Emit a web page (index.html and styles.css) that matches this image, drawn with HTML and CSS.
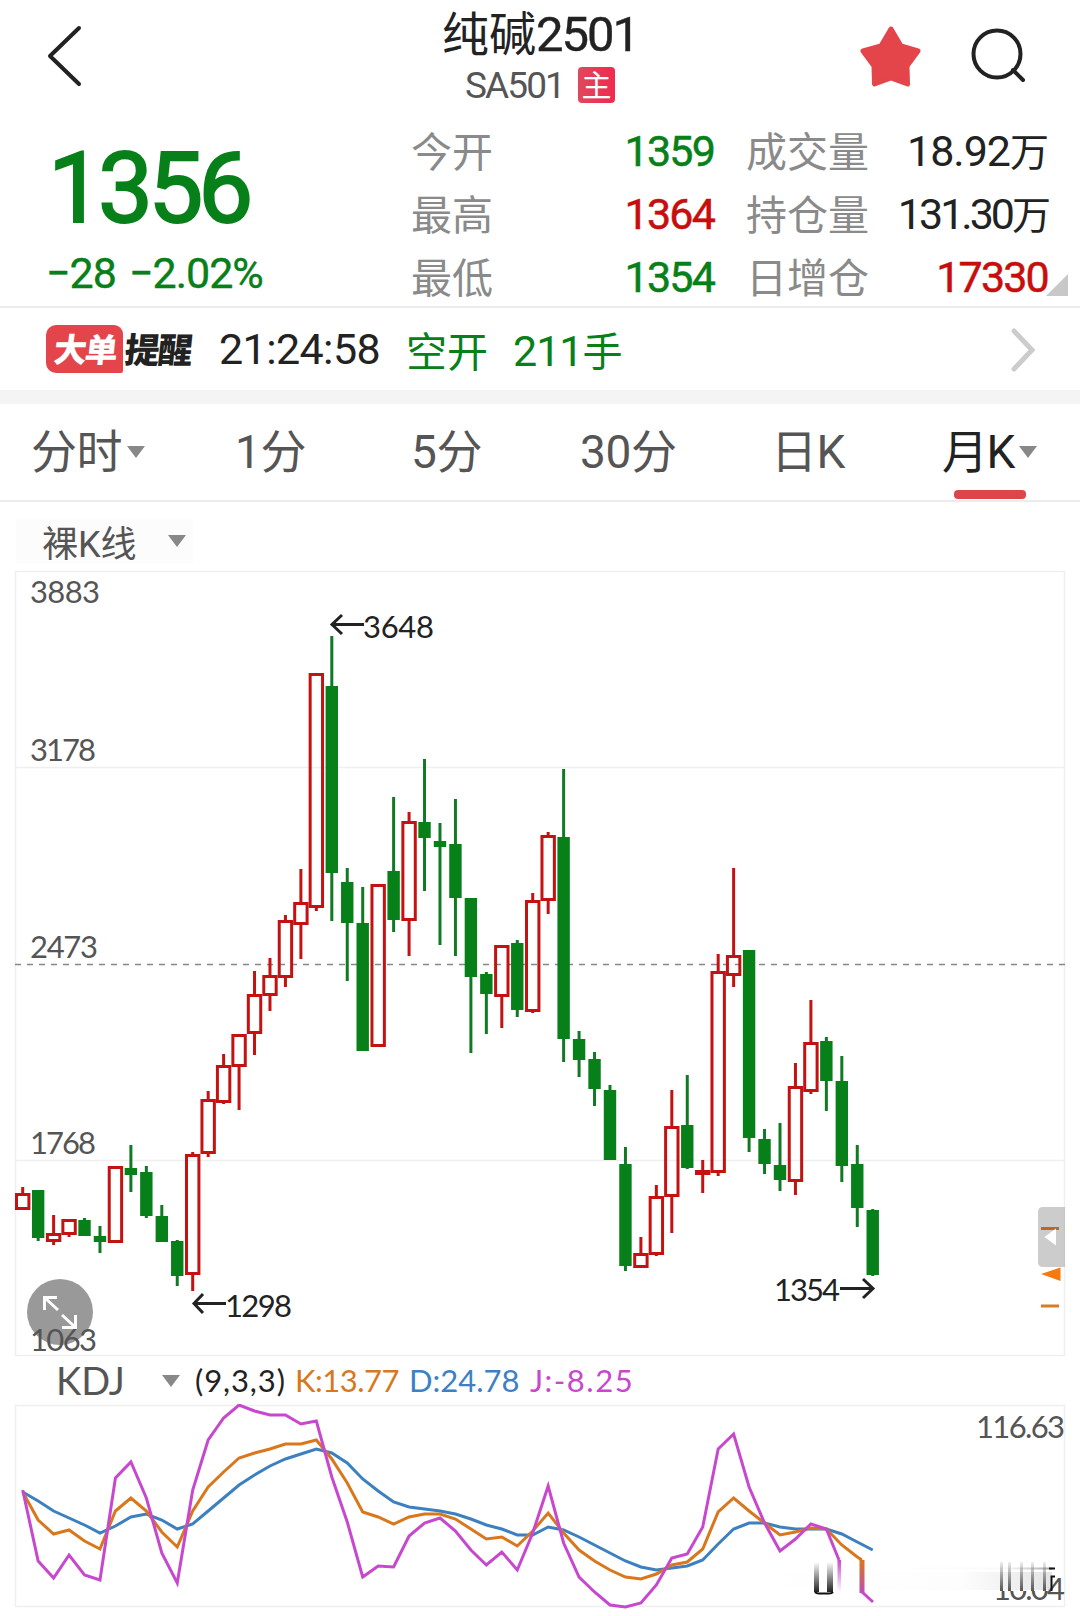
FILE: index.html
```html
<!DOCTYPE html>
<html lang="zh-CN">

<head>
  <meta charset="UTF-8">
  <meta name="viewport" content="width=device-width, initial-scale=1.0">
  <title>纯碱2501</title>

  <link rel="stylesheet" href="styles.css">
</head>

<body>
  <div id="container">
    <header class="top">
      <svg class="back" width="40" height="68" viewBox="0 0 40 68"><path d="M35 6 L6 34 L35 62"/></svg>
      <div class="name">
        <h1>纯碱<span>2501</span></h1>
        <p><span>SA501</span><em>主</em></p>
      </div>
      <div class="tools">
        <svg class="star" width="64" height="64" viewBox="0 0 64 64"><path d="M32 5 L42 22 L59 27 L48 42 L48.500 60 L32 54 L15.500 60 L15 42 L4 27 L22 22 Z"/></svg>
        <svg class="search" width="60" height="60" viewBox="0 0 60 60"><circle cx="28" cy="28" r="23.500"/><path d="M44 44 L54 54"/></svg>
      </div>
    </header>

    <section class="quote">
      <div class="price">
        <strong>1356</strong>
        <p><span>−28</span><span>−2.02%</span></p>
      </div>
      <dl class="detail">
        <dt>今开</dt><dd class="down">1359</dd>
        <dt>成交量</dt><dd class="volume">18.92<i>万</i></dd>
        <dt>最高</dt><dd class="up">1364</dd>
        <dt>持仓量</dt><dd class="hold">131.30<i>万</i></dd>
        <dt>最低</dt><dd class="down">1354</dd>
        <dt>日增仓</dt><dd class="up">17330</dd>
      </dl>
      <span class="corner"></span>
    </section>

    <section class="alert">
      <span class="tag"><b>大单</b></span><b class="remind">提醒</b>
      <span class="time">21:24:58</span>
      <span class="kind">空开</span>
      <span class="hands">211<i>手</i></span>
      <svg class="more" width="26" height="46" viewBox="0 0 26 46"><path d="M3 5 L21 24 L3 43"/></svg>
    </section>

    <nav class="tabs">
      <a class="arrow">分时</a>
      <a>1分</a>
      <a>5分</a>
      <a>30分</a>
      <a>日K</a>
      <a class="arrow on">月K</a>
    </nav>

    <div class="overlay"><span class="arrow">裸K线</span></div>

    <div class="kline">
      <svg width="1080" height="787" viewBox="0 570 1080 787">
        <g class="grid">
          <rect x="15.500" y="571.500" width="1049" height="784"/>
          <path d="M15 767.500 H1065 M15 1160.500 H1065"/>
          <path class="dash" d="M15 964.500 H1065"/>
        </g>
        <g id="candles"></g>
        <g class="axis">
          <text x="30" y="603" textLength="70">3883</text>
          <text x="30" y="761" textLength="66">3178</text>
          <text x="30" y="958" textLength="68">2473</text>
          <text x="30" y="1154" textLength="66">1768</text>
          <text x="30" y="1351" textLength="67">1063</text>
        </g>
        <g class="mark">
          <path d="M364 624.500 H332 M342 615 L332 624.500 L342 634"/>
          <text x="363" y="638" textLength="71">3648</text>
          <path d="M226 1303.500 H194 M203 1294 L194 1303.500 L203 1313"/>
          <text x="225" y="1317" textLength="67">1298</text>
          <path d="M840 1288.500 H873 M863 1279 L873 1288.500 L863 1298"/>
          <text x="774" y="1301" textLength="66">1354</text>
        </g>
        <g class="zoom">
          <circle cx="60" cy="1312" r="33"/>
          <path d="M44.500 1310 V1297.500 H57 M45 1298 L58 1310 M62 1315 L75 1327 M75.500 1315 V1327.500 H62"/>
        </g>
        <g class="side">
          <path class="line" d="M1041 1228.500 H1059 M1041 1306 H1059"/>
          <path class="flag" d="M1041 1274 L1060.500 1267.500 V1281 Z"/>
          <path class="handle" d="M1065 1207 H1043 Q1038 1207 1038 1212 V1262 Q1038 1267 1043 1267 H1065 Z"/>
          <path class="line top-line" d="M1041 1228.500 H1059"/>
          <path class="tri" d="M1044.500 1237 L1056 1228.500 V1245.500 Z"/>
        </g>
      </svg>
    </div>

    <div class="kdj-bar">
      <span class="arrow">KDJ</span>
      <span class="param">(9,3,3)</span>
      <span class="k">K:13.77</span>
      <span class="d">D:24.78</span>
      <span class="j">J:-8.25</span>
    </div>

    <div class="kdj">
      <svg width="1080" height="212" viewBox="0 1404 1080 212">
        <defs>
          <linearGradient id="smear" x1="0" y1="0" x2="0" y2="1">
            <stop offset="0" stop-color="#222" stop-opacity="0"/>
            <stop offset="1" stop-color="#222"/>
          </linearGradient>
          <linearGradient id="smearAxis" x1="0" y1="0" x2="0" y2="1">
            <stop offset="0" stop-color="#555" stop-opacity=".1"/>
            <stop offset="1" stop-color="#555"/>
          </linearGradient>
          <linearGradient id="smearJ" x1="0" y1="0" x2="0" y2="1">
            <stop offset="0" stop-color="#c748cf"/>
            <stop offset="1" stop-color="#c748cf" stop-opacity="0"/>
          </linearGradient>
          <linearGradient id="smearK" x1="0" y1="0" x2="0" y2="1">
            <stop offset="0" stop-color="#d9771c"/>
            <stop offset="1" stop-color="#bb50b5"/>
          </linearGradient>
          <linearGradient id="haze">
            <stop offset="0" stop-color="#888" stop-opacity="0"/>
            <stop offset=".7" stop-color="#888" stop-opacity=".05"/>
            <stop offset="1" stop-color="#666" stop-opacity=".6"/>
          </linearGradient>
        </defs>
        <g class="grid">
          <rect x="15.500" y="1405.500" width="1049" height="201"/>
        </g>
        <g id="lines"></g>
        <g class="axis">
          <text x="976" y="1438" textLength="89">116.63</text>
          <text x="993" y="1600" textLength="72">10.04</text>
        </g>
        <!-- blurred strip over the bottom right -->
        <rect x="990" y="1562" width="58" height="29" fill="#fff"/>
        <rect x="745" y="1572" width="307" height="18" fill="url(#haze)" opacity=".3"/>
        <rect x="814" y="1562" width="5" height="30" fill="url(#smear)"/>
        <rect x="827" y="1562" width="6" height="30" fill="url(#smear)"/>
        <path class="edge" d="M815 1592 Q816 1593.500 819 1593.500 H829 Q832 1593.500 833 1592"/>
        <rect x="837.500" y="1560" width="3.500" height="32" fill="url(#smearJ)"/>
        <rect x="859.500" y="1560" width="5" height="33" fill="url(#smearK)"/>
        <path class="j-tail" d="M862 1592 L873 1602"/>
        <g fill="url(#smearAxis)">
          <rect x="1000" y="1562" width="3" height="29"/>
          <rect x="1008" y="1562" width="3" height="29"/>
          <rect x="1020" y="1562" width="3" height="29"/>
          <rect x="1031" y="1562" width="3" height="29"/>
          <rect x="1043" y="1562" width="3" height="29"/>
        </g>
        <rect x="900" y="1567.500" width="152" height="2" fill="url(#haze)"/>
        <path class="edge" d="M1049 1568.500 H1055 M1055 1576.500 H1051.500 V1591"/>
      </svg>
    </div>
  </div>

  <script>
    // [up, high, body top, body bottom, low]
    const candles = [
      [1, 1187, 1193, 1210, 1210], [0, 1190, 1190, 1238, 1241], [1, 1215, 1233, 1242, 1245],
      [1, 1219, 1219, 1235, 1237], [0, 1218, 1220, 1236, 1236], [0, 1226, 1236, 1242, 1253],
      [1, 1166, 1166, 1243, 1243], [0, 1145, 1168, 1175, 1192], [0, 1166, 1172, 1216, 1218],
      [0, 1205, 1216, 1242, 1242], [0, 1240, 1241, 1276, 1286], [1, 1152, 1154, 1275, 1291],
      [1, 1091, 1099, 1154, 1157], [1, 1054, 1065, 1103, 1104], [1, 1034, 1034, 1067, 1110],
      [1, 971, 994, 1034, 1055], [1, 958, 975, 996, 1011], [1, 915, 920, 978, 987],
      [1, 869, 902, 925, 959], [1, 673, 673, 908, 911], [0, 636, 686, 873, 921],
      [0, 868, 882, 923, 981], [0, 887, 923, 1051, 1051], [1, 884, 884, 1047, 1047],
      [0, 797, 871, 920, 932], [1, 812, 821, 921, 956], [0, 759, 822, 838, 891],
      [0, 823, 841, 847, 945], [0, 799, 844, 898, 956], [0, 898, 898, 977, 1053],
      [0, 972, 974, 994, 1034], [1, 945, 945, 997, 1028], [0, 940, 943, 1010, 1017],
      [1, 893, 900, 1012, 1013], [1, 832, 835, 901, 914], [0, 769, 837, 1039, 1062],
      [0, 1031, 1039, 1060, 1077], [0, 1052, 1059, 1089, 1106], [0, 1085, 1090, 1160, 1160],
      [0, 1147, 1164, 1266, 1271], [1, 1237, 1253, 1268, 1268], [1, 1185, 1196, 1255, 1256],
      [1, 1090, 1126, 1197, 1233], [0, 1075, 1125, 1168, 1169], [1, 1160, 1170, 1175, 1193],
      [1, 954, 971, 1173, 1176], [1, 868, 955, 976, 987], [0, 950, 950, 1138, 1152],
      [0, 1129, 1139, 1164, 1174], [0, 1123, 1165, 1180, 1191], [1, 1063, 1086, 1182, 1195],
      [1, 1000, 1042, 1092, 1094], [0, 1037, 1041, 1081, 1111], [0, 1056, 1081, 1166, 1182],
      [0, 1145, 1164, 1208, 1227], [0, 1209, 1210, 1275, 1276]
    ];
    const d = [1492, 1501, 1511, 1518, 1525, 1533, 1526, 1517, 1514, 1520, 1529, 1524, 1511, 1498, 1485, 1475, 1466, 1459, 1454, 1449, 1453, 1463, 1479, 1491, 1502, 1507, 1509, 1511, 1514, 1519, 1525, 1529, 1535, 1535, 1527, 1530, 1537, 1545, 1553, 1561, 1567, 1570, 1568, 1566, 1560, 1544, 1529, 1523, 1523, 1527, 1529, 1529, 1529, 1534, 1542, 1550];
    const k = [1492, 1520, 1534, 1530, 1541, 1549, 1511, 1498, 1511, 1532, 1547, 1511, 1487, 1472, 1458, 1453, 1449, 1444, 1444, 1440, 1459, 1483, 1512, 1517, 1524, 1517, 1514, 1514, 1519, 1529, 1539, 1537, 1546, 1531, 1513, 1533, 1550, 1561, 1570, 1577, 1579, 1574, 1565, 1562, 1549, 1512, 1498, 1511, 1523, 1535, 1532, 1528, 1529, 1545, 1557];
    const j = [1490, 1561, 1578, 1555, 1575, 1580, 1478, 1462, 1498, 1553, 1583, 1490, 1440, 1418, 1405, 1411, 1415, 1415, 1424, 1421, 1477, 1522, 1577, 1566, 1567, 1536, 1523, 1518, 1531, 1550, 1565, 1552, 1570, 1533, 1486, 1543, 1577, 1592, 1605, 1607, 1603, 1585, 1558, 1554, 1527, 1449, 1434, 1487, 1523, 1551, 1539, 1524, 1529];

    const xAt = (i) => 22.7 + i * 15.455;

    let html = "";
    candles.forEach(([up, high, top, bottom, low], i) => {
      const x = xAt(i);
      if (up) {
        html += `<path class="red" d="M${x} ${high}V${top + 1}M${x} ${bottom - 1}V${low}"/>`;
        html += `<rect class="red" x="${x - 6.2}" y="${top + 1.5}" width="12.400" height="${bottom - top - 3}"/>`;
      } else {
        html += `<path class="green" d="M${x} ${high}V${low}"/>`;
        html += `<rect class="fill" x="${x - 6.2}" y="${top}" width="12.400" height="${bottom - top}"/>`;
      }
    });
    document.querySelector("#candles").innerHTML = html;

    const points = (list) => list.map((y, i) => `${xAt(i)},${y}`).join(" ");
    document.querySelector("#lines").innerHTML =
      `<polyline class="d-line" points="${points(d)}"/>` +
      `<polyline class="k-line" points="${points(k)} 862,1560"/>` +
      `<polyline class="j-line" points="${points(j)} 839,1560"/>`;
  </script>
</body>

</html>
```
FILE: styles.css
```css
* {
  margin: 0;
  padding: 0;
  box-sizing: border-box;
}
body {
  background: #fff;
  color: #222;
  font-family: Roboto, "Noto Sans CJK SC", sans-serif;
}
i, em {
  font-style: normal;
}
svg {
  display: block;
  fill: none;
}
#container {
  width: 1080px;
  height: 1616px;
  overflow: hidden;
}

/* header */
.top {
  display: grid;
  grid-template-columns: 300px 1fr 300px;
  height: 118px;
}
.back {
  margin: 22px 0 0 44px;
  stroke: #222;
  stroke-width: 4;
  stroke-linecap: round;
  stroke-linejoin: round;
}
.name {
  text-align: center;
}
.name h1 {
  height: 67px;
  line-height: 69px;
  font-size: 47px;
  font-weight: 400;
  white-space: nowrap;
}
.name h1 span {
  font-size: 49px;
  letter-spacing: -2px;
  -webkit-text-stroke: 0.4px;
}
.name p {
  display: flex;
  justify-content: center;
  align-items: center;
  gap: 14px;
  height: 36px;
  color: #555;
  font-size: 37px;
  letter-spacing: -1.9px;
}
.name em {
  width: 37px;
  height: 36px;
  border-radius: 4px;
  background: linear-gradient(90deg, #e0485c, #f02a50);
  color: #fff;
  font-size: 30px;
  line-height: 38px;
  letter-spacing: 0;
}
.tools {
  display: flex;
  gap: 46px;
  padding: 24px 0 0 79px;
}
.star {
  fill: #e3454b;
  stroke: #e3454b;
  stroke-width: 5;
  stroke-linejoin: round;
}
.search {
  margin-top: 2px;
  stroke: #222;
  stroke-width: 4;
  stroke-linecap: round;
}

/* quote */
.quote {
  position: relative;
  display: grid;
  grid-template-columns: 411px 1fr;
  height: 190px;
  border-bottom: 2px solid #ececec;
}
.price {
  color: #078019;
  padding-left: 48px;
}
.price strong {
  display: block;
  height: 125px;
  line-height: 142px;
  font-size: 98px;
  font-weight: 400;
  letter-spacing: -5px;
  -webkit-text-stroke: 2px;
}
.price p {
  display: flex;
  gap: 13px;
  margin-left: -2px;
  font-size: 43px;
  line-height: 60px;
  letter-spacing: -1px;
  -webkit-text-stroke: 0.4px;
}
.detail {
  display: grid;
  grid-template-columns: 160px 143px 155px 179px;
  grid-auto-rows: 63px;
  padding-top: 2px;
  line-height: 63px;
}
.detail dt {
  padding-top: 2px;
  color: #8a8a8a;
  font-size: 41px;
}
.detail dt:nth-of-type(even) {
  padding-left: 32px;
}
.detail dd {
  text-align: right;
  font-size: 43px;
  letter-spacing: -2px;
  white-space: nowrap;
}
.detail i {
  font-size: 39px;
}
.detail .volume {
  letter-spacing: -1px;
}
.detail .hold {
  letter-spacing: -3px;
}
.down {
  color: #078019;
}
.up {
  color: #c80d0d;
}
.detail .down, .detail .up {
  letter-spacing: -1.8px;
  -webkit-text-stroke: 0.5px;
}
.corner {
  position: absolute;
  right: 12px;
  bottom: 10px;
  border: 11px solid #c8c8c8;
  border-top-color: transparent;
  border-left-color: transparent;
}

/* big order alert */
.alert {
  display: flex;
  align-items: center;
  height: 82px;
  padding-left: 46px;
  font-size: 43px;
}
.tag {
  width: 77px;
  height: 48px;
  border-radius: 10px 9px 2px 10px;
  background: #e3454b;
  color: #fff;
  text-align: center;
}
.tag b, .remind {
  display: inline-block;
  font-size: 33px;
  font-weight: 900;
  line-height: 46px;
  letter-spacing: -2px;
  transform: skewX(-6deg);
}
.tag b {
  padding-top: 3px;
  line-height: 45px;
  vertical-align: top;
}
.remind {
  width: 67px;
  padding-top: 5px;
  margin-left: 2px;
  font-size: 35px;
  white-space: nowrap;
}
.time {
  width: 163px;
  margin-left: 27px;
  letter-spacing: -0.6px;
}
.kind {
  width: 82px;
  margin-left: 24px;
  color: #078019;
  font-size: 41px;
}
.hands {
  margin-left: 25px;
  color: #078019;
  letter-spacing: -1px;
}
.hands i {
  font-size: 40px;
}
.more {
  margin: 0 43px 0 auto;
  stroke: #ccc;
  stroke-width: 5;
  stroke-linecap: round;
}

/* period tabs */
.tabs {
  display: grid;
  grid-template-columns: 204px 176px 169px 191px 171px 1fr;
  height: 112px;
  padding-left: 31px;
  border-top: 14px solid #f4f4f4;
  border-bottom: 2px solid #ececec;
  color: #555;
  font-size: 46px;
  line-height: 97px;
}
.tabs a {
  position: relative;
  letter-spacing: -0.4px;
  white-space: nowrap;
}
.arrow::after {
  content: "";
  display: inline-block;
  margin-left: 5px;
  border: 9px solid transparent;
  border-top: 12px solid #888;
  border-bottom: 0;
  vertical-align: middle;
}
.tabs .arrow::after {
  position: relative;
  top: -4px;
}
.tabs .on {
  color: #222;
  letter-spacing: -1.4px;
}
.tabs .on::before {
  content: "";
  position: absolute;
  left: 12px;
  bottom: 2px;
  width: 72px;
  height: 9px;
  border-radius: 4px;
  background: #dd454c;
}

.overlay {
  height: 68px;
  padding: 17px 0 0 16px;
}
.overlay span {
  display: flex;
  align-items: center;
  justify-content: space-between;
  width: 177px;
  height: 44px;
  padding: 0 7px 0 26px;
  background: #fcfcfc;
  color: #555;
  font-size: 36px;
}

/* charts */
.grid rect, .grid path {
  stroke: #efefef;
  stroke-width: 1.5;
}
.grid .dash {
  stroke: #888;
  stroke-dasharray: 6 6;
}
.axis text, .mark text {
  font-family: Lato, sans-serif;
  font-size: 31px;
}
.axis text {
  fill: #555;
}
.mark text {
  fill: #222;
}
.mark path {
  stroke: #222;
  stroke-width: 3;
}
.red {
  stroke: #c41212;
  stroke-width: 3;
}
.green {
  stroke: #107a22;
  stroke-width: 3;
}
.fill {
  fill: #078019;
}
.zoom circle {
  fill: #555;
  opacity: .6;
}
.zoom path {
  stroke: #fff;
  stroke-width: 3;
}
.side .line {
  stroke: #d57e28;
  stroke-width: 3;
}
.side .top-line {
  stroke: #b8692a;
}
.side .flag {
  fill: #f67a10;
}
.side .handle {
  fill: #aaa;
  opacity: .6;
}
.side .tri {
  fill: #fff;
}

.kdj-bar {
  display: flex;
  align-items: center;
  height: 47px;
  padding-left: 56px;
  font-family: Lato, sans-serif;
  font-size: 31px;
  line-height: 51px;
}
.kdj-bar .arrow {
  display: flex;
  align-items: center;
  justify-content: space-between;
  width: 124px;
  color: #555;
  font-size: 38px;
}
.param {
  width: 91px;
  margin-left: 15px;
  letter-spacing: 0.9px;
}
.k {
  width: 103px;
  margin-left: 9px;
  color: #d9771c;
  letter-spacing: -0.5px;
}
.d {
  width: 110px;
  margin-left: 11px;
  color: #3c80c6;
}
.j {
  margin-left: 11px;
  color: #c748cf;
  letter-spacing: 1.5px;
}
#lines polyline, .j-tail {
  stroke-width: 3;
}
.d-line {
  stroke: #3c80c0;
}
.k-line {
  stroke: #d9771c;
}
.j-line, .j-tail {
  stroke: #c748cf;
}
.edge {
  stroke: #111;
  stroke-width: 2;
}
```
